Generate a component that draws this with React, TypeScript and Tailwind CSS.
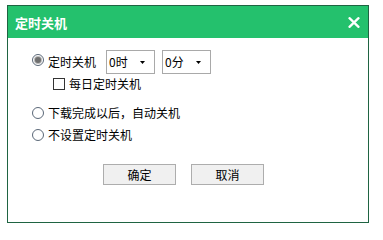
const font = { fontFamily: '"Noto Sans CJK SC", "Microsoft YaHei", sans-serif' };

const Radio = ({ checked }: { checked?: boolean }) => (
  <span className="w-[12px] h-[12px] shrink-0 rounded-full border border-[#5b6878] bg-white flex items-center justify-center">
    {checked && <span className="w-[6px] h-[6px] rounded-full bg-[#6f6f6f] ring-1 ring-[#b9b9b9]" />}
  </span>
);

const Select = ({ value }: { value: string }) => (
  <div className="w-[49px] h-[24px] border border-[#a9a9a9] bg-white flex items-center justify-between pl-[2px] pr-[9px] text-[12px] text-black">
    <span>{value}</span>
    <svg width="5" height="3" viewBox="0 0 5 3">
      <path d="M0 0H5L2.5 3Z" fill="#000" />
    </svg>
  </div>
);

const Btn = ({ label }: { label: string }) => (
  <button className="w-[73px] h-[21px] border border-[#adadad] bg-[#f0f0f0] text-[12px] text-black flex items-center justify-center leading-none">
    {label}
  </button>
);

export default function App() {
  return (
    <div className="w-[383px] h-[226px] bg-white pt-[5px] pl-[7px]" style={font}>
      <div className="w-[362px] h-[218px] border border-[#1f6442] bg-white flex flex-col">
        <div className="h-[32px] bg-[#24c16d] flex items-center justify-between pl-[7px] pr-[8px]">
          <span className="text-white font-bold text-[13px] leading-none">定时关机</span>
          <svg width="12" height="11" viewBox="0 0 12 11">
            <path d="M1.5 1.2L10.5 9.8M10.5 1.2L1.5 9.8" stroke="#fff" strokeWidth="2.3" strokeLinecap="round" />
          </svg>
        </div>

        <div className="pl-[24px] pt-[12px] text-[12px] text-black leading-none">
          <div className="flex items-center h-[24px]">
            <span className="mb-[4px]">
              <Radio checked />
            </span>
            <span className="ml-[4px] w-[58px]">定时关机</span>
            <Select value="0时" />
            <div className="ml-[7px]">
              <Select value="0分" />
            </div>
          </div>

          <div className="flex items-center h-[13px] mt-[3px] ml-[21px]">
            <span className="w-[12px] h-[12px] border border-[#333] bg-white shrink-0" />
            <span className="ml-[4px]">每日定时关机</span>
          </div>

          <div className="flex items-center h-[12px] mt-[17px]">
            <Radio />
            <span className="ml-[4px]">下载完成以后，自动关机</span>
          </div>

          <div className="flex items-center h-[12px] mt-[10px]">
            <Radio />
            <span className="ml-[4px]">不设置定时关机</span>
          </div>

          <div className="flex gap-[15px] ml-[71px] mt-[23px]">
            <Btn label="确定" />
            <Btn label="取消" />
          </div>
        </div>
      </div>
    </div>
  );
}
